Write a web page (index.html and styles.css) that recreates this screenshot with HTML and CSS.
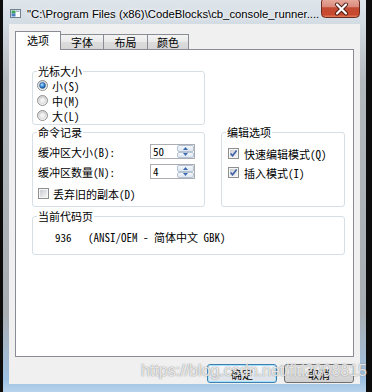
FILE: index.html
```html
<!DOCTYPE html>
<html>
<head>
<title>属性</title>
<link rel="stylesheet" href="styles.css">
</head>
<body>
<svg class="defs" width="0" height="0">
	<defs>
		<linearGradient id="rbg" x1="0" y1="0" x2="0" y2="1">
			<stop offset="0" stop-color="#d2d2d2"/>
			<stop offset="1" stop-color="#fbfbfb"/>
		</linearGradient>
		<radialGradient id="rbdot" cx="0.4" cy="0.35" r="0.7">
			<stop offset="0" stop-color="#b9e4ff"/>
			<stop offset="0.5" stop-color="#3f8fdc"/>
			<stop offset="1" stop-color="#174f97"/>
		</radialGradient>
		<linearGradient id="cbg" x1="0" y1="0" x2="1" y2="1">
			<stop offset="0" stop-color="#c9cdd3"/>
			<stop offset="1" stop-color="#f4f4f4"/>
		</linearGradient>
		<linearGradient id="closeg" x1="0" y1="0" x2="0" y2="1">
			<stop offset="0" stop-color="#eab0a4"/>
			<stop offset="0.45" stop-color="#d98b7c"/>
			<stop offset="0.5" stop-color="#c24a33"/>
			<stop offset="0.85" stop-color="#c9492f"/>
			<stop offset="1" stop-color="#e58a68"/>
		</linearGradient>
	</defs>
</svg>

<div class="desk">
	<div class="win">
		<div class="titlebar">
			<svg class="appicon" width="11" height="9" viewBox="0 0 11 9">
				<rect x="0.5" y="0.5" width="10" height="8" fill="#fdfdfd" stroke="#6f7f8f"/>
				<rect x="1.5" y="1.5" width="4" height="3" fill="#3aa35f"/>
				<rect x="1.5" y="4.5" width="4" height="3" fill="#4b7fc1"/>
				<rect x="6" y="1.5" width="3.5" height="1.5" fill="#9fb4c8"/>
			</svg>
			<span class="title">"C:\Program Files (x86)\CodeBlocks\cb_console_runner....</span>
			<div class="closebtn">
				<svg width="39" height="18" viewBox="0 0 39 18">
					<rect x="0.5" y="-2" width="38" height="19.5" rx="4" fill="url(#closeg)" stroke="#6b2a22"/>
					<path d="M16 4.5 L25 13.5 M25 4.5 L16 13.5" stroke="#4a1a14" stroke-width="4" stroke-linecap="round"/>
					<path d="M16 4.5 L25 13.5 M25 4.5 L16 13.5" stroke="#ffffff" stroke-width="2.2" stroke-linecap="round"/>
				</svg>
			</div>
		</div>

		<div class="client">
			<div class="tabs">
				<div class="tab active">选项</div>
				<div class="tab t2">字体</div>
				<div class="tab t3">布局</div>
				<div class="tab t4">颜色</div>
			</div>
			<div class="panel">
				<div class="groups">
					<fieldset class="grp g-cursor">
						<legend>光标大小</legend>
						<div class="opt-row">
							<svg class="rb" width="11" height="11" viewBox="0 0 11 11"><circle cx="5.5" cy="5.5" r="5" fill="url(#rbg)" stroke="#8e8f8f"/><circle cx="5.5" cy="5.5" r="2.9" fill="url(#rbdot)" stroke="#1b4c86" stroke-width="0.6"/></svg>
							<span>小(S)</span>
						</div>
						<div class="opt-row">
							<svg class="rb" width="11" height="11" viewBox="0 0 11 11"><circle cx="5.5" cy="5.5" r="5" fill="url(#rbg)" stroke="#8e8f8f"/><circle cx="5.5" cy="5.5" r="3" fill="#f2f2f2" stroke="#c6c6c6" stroke-width="0.6"/></svg>
							<span>中(M)</span>
						</div>
						<div class="opt-row">
							<svg class="rb" width="11" height="11" viewBox="0 0 11 11"><circle cx="5.5" cy="5.5" r="5" fill="url(#rbg)" stroke="#8e8f8f"/><circle cx="5.5" cy="5.5" r="3" fill="#f2f2f2" stroke="#c6c6c6" stroke-width="0.6"/></svg>
							<span>大(L)</span>
						</div>
					</fieldset>

					<fieldset class="grp g-hist">
						<legend>命令记录</legend>
						<div class="field-row first">
							<span>缓冲区大小(B):</span>
							<div class="spin">
								<span class="spin-val">50</span>
								<div class="spin-btns">
									<div class="sb"><svg width="5" height="3" viewBox="0 0 5 3"><path d="M0 3 L2.5 0 L5 3 Z" fill="#3e6cb0"/></svg></div>
									<div class="sb"><svg width="5" height="3" viewBox="0 0 5 3"><path d="M0 0 L2.5 3 L5 0 Z" fill="#3e6cb0"/></svg></div>
								</div>
							</div>
						</div>
						<div class="field-row">
							<span>缓冲区数量(N):</span>
							<div class="spin">
								<span class="spin-val">4</span>
								<div class="spin-btns">
									<div class="sb"><svg width="5" height="3" viewBox="0 0 5 3"><path d="M0 3 L2.5 0 L5 3 Z" fill="#3e6cb0"/></svg></div>
									<div class="sb"><svg width="5" height="3" viewBox="0 0 5 3"><path d="M0 0 L2.5 3 L5 0 Z" fill="#3e6cb0"/></svg></div>
								</div>
							</div>
						</div>
						<div class="check-row discard">
							<svg class="cb" width="11" height="11" viewBox="0 0 11 11"><rect x="0.5" y="0.5" width="10" height="10" fill="#f6f6f6" stroke="#8e8f8f"/><rect x="2" y="2" width="7" height="7" fill="url(#cbg)"/></svg>
							<span>丢弃旧的副本(D)</span>
						</div>
					</fieldset>

					<fieldset class="grp g-edit">
						<legend>编辑选项</legend>
						<div class="check-row first">
							<svg class="cb" width="11" height="11" viewBox="0 0 11 11"><rect x="0.5" y="0.5" width="10" height="10" fill="#f6f6f6" stroke="#8e8f8f"/><rect x="2" y="2" width="7" height="7" fill="url(#cbg)"/><path d="M2.6 5.4 L4.6 7.8 L8.6 2.6" fill="none" stroke="#3d5fa6" stroke-width="1.6"/></svg>
							<span>快速编辑模式(Q)</span>
						</div>
						<div class="check-row">
							<svg class="cb" width="11" height="11" viewBox="0 0 11 11"><rect x="0.5" y="0.5" width="10" height="10" fill="#f6f6f6" stroke="#8e8f8f"/><rect x="2" y="2" width="7" height="7" fill="url(#cbg)"/><path d="M2.6 5.4 L4.6 7.8 L8.6 2.6" fill="none" stroke="#3d5fa6" stroke-width="1.6"/></svg>
							<span>插入模式(I)</span>
						</div>
					</fieldset>

					<fieldset class="grp g-code">
						<legend>当前代码页</legend>
						<div class="code-line">936   (ANSI/OEM - 简体中文 GBK)</div>
					</fieldset>
				</div>
			</div>
			<div class="buttons">
				<button class="btn default">确定</button>
				<button class="btn">取消</button>
			</div>
		</div>
	</div>
	<div class="watermark">https://blog.csdn.net/fiti2008815</div>
</div>
</body>
</html>
```

FILE: styles.css
```css
body
{
	margin : 0;
	width : 372px;
	height : 392px;
	overflow : hidden;
	background-color : #0c0c0c;
	font-family : "Noto Sans Mono CJK SC", "Noto Sans CJK SC", sans-serif;
	font-size : 11px;
	color : #000;
}
.defs
{
	display : block;
	width : 0;
	height : 0;
}
.desk
{
	position : relative;
	height : 392px;
	overflow : hidden;
}
.win
{
	margin-left : 3px;
	width : 363px;
	height : 392px;
	display : flex;
	flex-direction : column;
	background : linear-gradient(#dfe5eb 0, #d3dbe3 24px, #b4b9be 80px, #a9aeb3 80%, #9fc2e3 97%, #b7d3ec 100%);
}

/* title bar */
.titlebar
{
	height : 24px;
	display : flex;
	align-items : center;
	padding-left : 7px;
}
.appicon
{
	margin-top : 2px;
	flex : none;
}
.title
{
	margin-left : 6px;
	margin-top : 3px;
	font-family : "Liberation Sans", sans-serif;
	font-size : 11.3px;
	white-space : nowrap;
	color : #000;
	text-shadow : 0 0 6px #fff, 0 0 3px #fff;
}
.closebtn
{
	margin-left : auto;
	margin-right : 6px;
	align-self : flex-start;
	width : 39px;
	height : 18px;
}
.closebtn svg
{
	display : block;
}

/* client area */
.client
{
	margin : 0 6px;
	height : 360px;
	box-sizing : border-box;
	padding : 7px 6px 0 6px;
	background-color : #f0f0f0;
}
.tabs
{
	display : flex;
	align-items : flex-end;
	height : 19px;
	margin-bottom : -1px;
	position : relative;
	z-index : 1;
}
.tab
{
	box-sizing : border-box;
	height : 15px;
	margin-bottom : 1px;
	margin-left : -1px;
	border : 1px solid #898c95;
	border-bottom : none;
	background : linear-gradient(#f4f4f4, #e9e9e9 50%, #dcdcdc 51%, #d6d6d6);
	text-align : center;
	line-height : 14px;
	font-size : 11px;
}
.tab.active
{
	width : 46px;
	height : 19px;
	margin-bottom : 0;
	margin-left : 0;
	background : #fff;
	line-height : 17px;
	position : relative;
	z-index : 2;
}
.tab.t2 { width : 44px; }
.tab.t3 { width : 45px; }
.tab.t4 { width : 42px; }

.panel
{
	box-sizing : border-box;
	height : 308px;
	padding : 14px 0 0 16px;
	border : 1px solid #898c95;
	background-color : #fff;
}
.groups
{
	display : grid;
	grid-template-columns : 173px 124px;
	column-gap : 16px;
}
.grp
{
	margin : 0;
	padding : 0 4px 1px 4px;
	min-width : 0;
	border : 1px solid #d5dfe5;
	border-radius : 3px;
}
.grp legend
{
	padding : 0 1px;
	line-height : 14px;
	font-size : 11px;
}
.g-cursor
{
	grid-column : 1;
	grid-row : 1;
}
.g-hist
{
	grid-column : 1;
	grid-row : 2;
	padding-bottom : 5px;
}
.g-edit
{
	grid-column : 2;
	grid-row : 2;
}
.g-code
{
	grid-column : 1 / 3;
	grid-row : 3;
	margin-top : 2px;
	padding-bottom : 10px;
}

.opt-row
{
	display : flex;
	align-items : center;
	gap : 4px;
	height : 15px;
}
.rb, .cb
{
	display : block;
	flex : none;
}
.field-row
{
	display : flex;
	align-items : center;
	height : 17px;
	padding-left : 1px;
	margin-top : 3px;
}
.field-row.first
{
	margin-top : 4px;
}
.spin
{
	margin-left : auto;
	margin-right : 5px;
	width : 45px;
	height : 15px;
	box-sizing : border-box;
	display : flex;
	border : 1px solid #abadb3;
	background-color : #fff;
}
.spin-val
{
	flex : 1;
	padding-left : 2px;
	line-height : 13px;
}
.spin-btns
{
	width : 17px;
	display : flex;
	flex-direction : column;
}
.sb
{
	flex : 1;
	display : flex;
	align-items : center;
	justify-content : center;
	border : 1px solid #b5c3d3;
	border-radius : 2px;
	background : linear-gradient(#f4f7fb, #dde6f0);
}
.sb svg
{
	display : block;
}
.check-row
{
	display : flex;
	align-items : center;
	gap : 5px;
	height : 15px;
	margin-top : 4px;
	padding-left : 2px;
}
.check-row.first
{
	margin-top : 7px;
}
.check-row.discard
{
	margin-top : 6px;
	padding-left : 1px;
	gap : 4px;
}
.code-line
{
	margin-top : 7px;
	padding-left : 18px;
	line-height : 14px;
	white-space : pre;
}

/* dialog buttons */
.buttons
{
	display : flex;
	justify-content : flex-end;
	gap : 7px;
	margin-top : 7px;
}
.btn
{
	width : 70px;
	height : 19px;
	padding : 0;
	border : 1px solid #707070;
	border-radius : 3px;
	background : linear-gradient(#f2f2f2, #ebebeb 50%, #dddddd 51%, #cfcfcf);
	font-family : inherit;
	font-size : 11px;
	color : #000;
}
.btn.default
{
	border-color : #3c7fb1;
	box-shadow : inset 0 0 0 1px #a6e3fa;
	background : linear-gradient(#f7f9fb, #eef2f5 50%, #e4e9ee 51%, #dde3e9);
}

.watermark
{
	position : absolute;
	right : 5px;
	top : 362px;
	font-family : "Liberation Sans", sans-serif;
	font-size : 16px;
	color : rgba(255,255,255,0.8);
	text-shadow : 0 0 1px rgba(100,100,100,0.7), 0 0 2px rgba(140,140,140,0.5);
	white-space : nowrap;
	pointer-events : none;
}
```
